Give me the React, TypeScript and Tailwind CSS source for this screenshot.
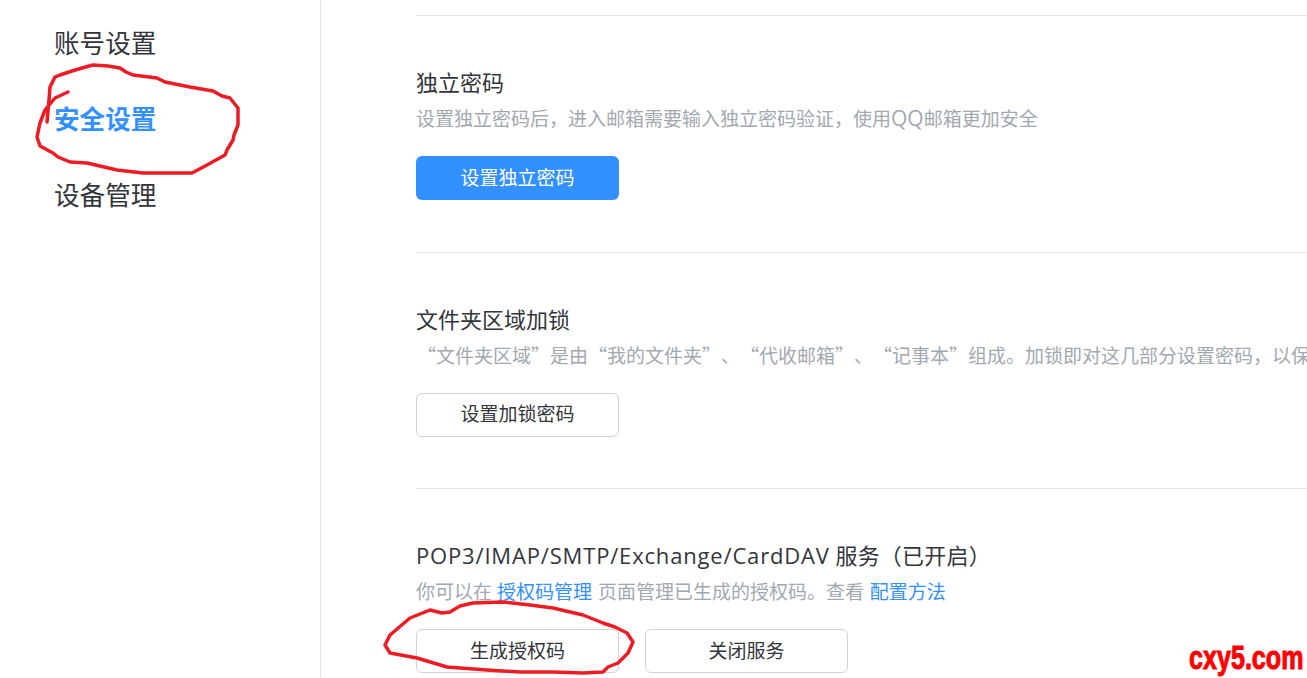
const sans = "font-['Open_Sans','Noto_Sans_CJK_SC',sans-serif]";

function OutlineButton({ label }: { label: string }) {
  return (
    <button className="w-[203px] h-[44px] rounded-[6px] border border-[#cfd2d6] bg-white text-[19px] text-[#33353a]">
      {label}
    </button>
  );
}

function Section({ title, children, desc }: { title: React.ReactNode; desc: React.ReactNode; children: React.ReactNode }) {
  return (
    <section className="h-[236.5px] border-t border-[#e6e7e9] pt-[50px]">
      <h3 className="h-[32px] text-[22px] leading-[32px] text-[#33353a]">{title}</h3>
      <p className="mt-[5px] h-[32px] whitespace-nowrap text-[19px] leading-[32px] text-[#a2a8b0]">{desc}</p>
      <div className="mt-[21px] flex gap-[26px]">{children}</div>
    </section>
  );
}

export default function App() {
  return (
    <div className={`relative flex h-[678px] w-[1307px] overflow-hidden bg-white ${sans}`}>
      {/* Sidebar */}
      <aside className="w-[321px] shrink-0 border-r border-[#e6e7ec] pl-[54px] pt-[6px]">
        <ul className="text-[25.6px] leading-[76px] text-[#33353a]">
          <li>账号设置</li>
          <li className="font-bold text-[#3390ff]">安全设置</li>
          <li>设备管理</li>
        </ul>
      </aside>

      {/* Settings */}
      <main className="min-w-0 flex-1 pl-[95px] pt-[15px]">
        <Section
          title="独立密码"
          desc={
            <>
              设置独立密码后，进入邮箱需要输入独立密码验证，使用<span className="text-[21px] leading-none">QQ</span>邮箱更加安全
            </>
          }
        >
          <button className="h-[44px] w-[203px] rounded-[6px] bg-[#3390ff] text-[19px] text-white">设置独立密码</button>
        </Section>
        <Section
          title="文件夹区域加锁"
          desc={
            <span className="block w-[891px] -translate-y-[1px] overflow-hidden pl-[1px] font-['Noto_Sans_CJK_SC',sans-serif] [font-feature-settings:'chws'_0] [text-spacing-trim:space-all]">
              “文件夹区域”是由“我的文件夹”、“代收邮箱”、“记事本”组成。加锁即对这几部分设置密码，以保护您的隐私
            </span>
          }
        >
          <OutlineButton label="设置加锁密码" />
        </Section>
        <Section
          title={
            <>
              <span className="tracking-[0.83px]">POP3/IMAP/SMTP/Exchange/CardDAV</span> <span className="tracking-[0.2px]">服务（已开启）</span>
            </>
          }
          desc={
            <>
              你可以在 <span className="text-[#3390ff]">授权码管理</span> <span className="ml-[1px]">页面管理已生成的授权码。查看</span>{" "}
              <span className="ml-[1px] text-[#3390ff]">配置方法</span>
            </>
          }
        >
          <OutlineButton label="生成授权码" />
          <OutlineButton label="关闭服务" />
        </Section>
      </main>

      {/* Hand-drawn marks */}
      <svg className="pointer-events-none absolute left-0 top-0" width="1307" height="678" fill="none" stroke="#ed1c24" strokeWidth="3.5" strokeLinejoin="round" strokeLinecap="round">
        <path d="M47 122 L49 100 L50 87 L55 77 L60 75 L72 71 L82 68 L93 65 L108 66 L120 68 L126 72 L133 75 L157 78 L165 82 L170 83 L190 87 L213 91 L222 96 L230 98 L238 108 L238 125 L234 135 L233 140 L227 150 L225 155 L207 165 L192 173 L143 173 L117 170 L87 163 L70 162 L58 157 L53 153 L40 146 L37 137 L40 123 L45 110 L55 98 L68 92" />
        <path d="M442 613 L450 612 L460 606 L473 603 L503 602 L530 605 L553 608 L583 615 L603 623 L615 627 L627 633 L633 642 L628 653 L618 663 L608 667 L603 672 L583 673 L553 672 L520 672 L487 670 L447 667 L417 658 L390 653 L385 645 L390 635 L410 618 L430 610 L442 613" />
      </svg>

      {/* Watermark */}
      <div className="absolute bottom-[2px] right-[4px] origin-right scale-x-[0.76] whitespace-nowrap font-['Liberation_Sans',sans-serif] text-[33px] font-bold leading-[36px] text-[#ff0000] [-webkit-text-stroke:1px_#ff0000]">
        cxy5.com
      </div>
    </div>
  );
}
